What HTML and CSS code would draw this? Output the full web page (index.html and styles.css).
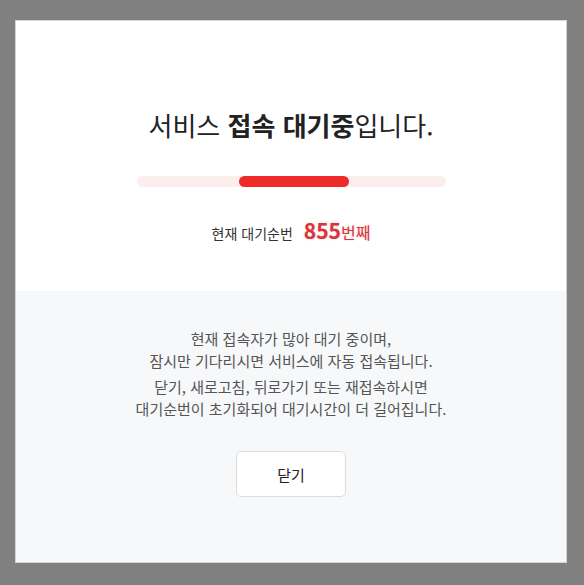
FILE: index.html
```html
<!DOCTYPE html>
<html lang="ko">
<head>
    <meta charset="UTF-8">
    <meta name="viewport" content="width=device-width, initial-scale=1.0">
    <title>서비스 접속 대기</title>
    <link rel="stylesheet" href="styles.css">
</head>
<body>
    <div class="modal">
        <div class="wait-top">
            <h1 class="wait-title">서비스 <strong>접속 대기중</strong>입니다.</h1>
            <div class="progress">
                <div class="progress-bar"></div>
            </div>
            <p class="wait-count">
                <span class="count-label">현재 대기순번</span>
                <span class="count-num">855</span><span class="count-unit">번째</span>
            </p>
        </div>
        <div class="wait-bottom">
            <p class="notice">현재 접속자가 많아 대기 중이며,<br>잠시만 기다리시면 서비스에 자동 접속됩니다.</p>
            <p class="notice">닫기, 새로고침, 뒤로가기 또는 재접속하시면<br>대기순번이 초기화되어 대기시간이 더 길어집니다.</p>
            <button type="button" class="btn-close">닫기</button>
        </div>
    </div>
</body>
</html>
```

FILE: styles.css
```css
body {
    margin: 0;
    background-color: #808080;
    font-family: "Noto Sans CJK KR", "Noto Sans", sans-serif;
    height: 585px;
    overflow: hidden;
}
.modal {
    width: 550px;
    height: 541px;
    margin: 20px 0 0 15px;
    border: 1px solid #d4d4d4;
    background-color: #fff;
    display: flex;
    flex-direction: column;
}
.wait-top {
    height: 270px;
    box-sizing: border-box;
    padding-top: 86px;
    text-align: center;
}
.wait-title {
    margin: 0;
    font-size: 26px;
    line-height: 36px;
    font-weight: 400;
    color: #222;
}
.wait-title strong {
    font-weight: 700;
}
.progress {
    width: 309px;
    height: 11px;
    margin: 33px auto 0;
    background-color: #fdeeee;
    border-radius: 6px;
    position: relative;
}
.progress-bar {
    position: absolute;
    left: 102px;
    top: 0;
    width: 110px;
    height: 11px;
    border-radius: 6px;
    background-color: #ee2a2a;
}
.wait-count {
    margin: 30px 0 0;
    line-height: 26px;
    display: flex;
    justify-content: center;
    align-items: baseline;
}
.count-label {
    font-size: 14px;
    color: #333;
    margin-right: 11px;
}
.count-num {
    font-size: 21px;
    font-weight: 700;
    color: #d6363c;
    text-shadow: 0 0 2px rgba(214, 54, 60, 0.35);
}
.count-unit {
    font-size: 16px;
    color: #d6363c;
    text-shadow: 0 0 2px rgba(214, 54, 60, 0.3);
}
.wait-bottom {
    flex: 1;
    background-color: #f7f8fa;
    padding-top: 37px;
    text-align: center;
}
.notice {
    margin: 0 0 4px;
    font-size: 15px;
    line-height: 22px;
    color: #555;
}
.btn-close {
    margin-top: 27px;
    width: 110px;
    height: 46px;
    background-color: #fff;
    border: 1px solid #dcdcdc;
    border-radius: 5px;
    font-family: inherit;
    font-size: 15px;
    color: #222;
    cursor: pointer;
}
```
